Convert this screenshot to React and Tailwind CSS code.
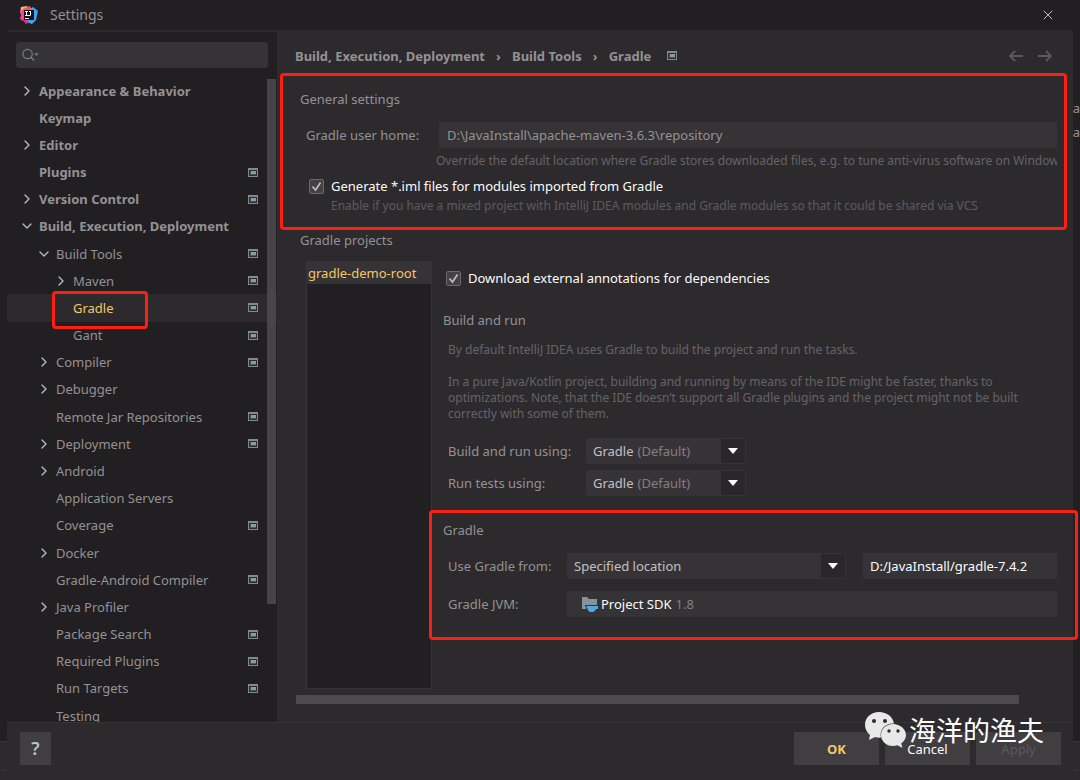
import { ChevronDown, ChevronRight, X } from "lucide-react";

const treeItems = [
  { label: "Appearance & Behavior", level: 0, arrow: "right" },
  { label: "Keymap", level: 0 },
  { label: "Editor", level: 0, arrow: "right" },
  { label: "Plugins", level: 0, project: true },
  { label: "Version Control", level: 0, arrow: "right", project: true },
  { label: "Build, Execution, Deployment", level: 0, arrow: "down" },
  { label: "Build Tools", level: 1, arrow: "down", project: true },
  { label: "Maven", level: 2, arrow: "right", project: true },
  { label: "Gradle", level: 2, project: true, selected: true },
  { label: "Gant", level: 2, project: true },
  { label: "Compiler", level: 1, arrow: "right", project: true },
  { label: "Debugger", level: 1, arrow: "right" },
  { label: "Remote Jar Repositories", level: 1, project: true },
  { label: "Deployment", level: 1, arrow: "right", project: true },
  { label: "Android", level: 1, arrow: "right" },
  { label: "Application Servers", level: 1 },
  { label: "Coverage", level: 1, project: true },
  { label: "Docker", level: 1, arrow: "right" },
  { label: "Gradle-Android Compiler", level: 1, project: true },
  { label: "Java Profiler", level: 1, arrow: "right" },
  { label: "Package Search", level: 1, project: true },
  { label: "Required Plugins", level: 1, project: true },
  { label: "Run Targets", level: 1, project: true },
  { label: "Testing", level: 1 },
];

const indents = ["pl-[12px]", "pl-[29px]", "pl-[46px]"];

function ProjectIcon() {
  return (
    <svg className="h-[9px] w-[10px] shrink-0" viewBox="0 0 10 9">
      <path fill="#7f8b91" d="M0 0h10v9H0z" />
      <path fill="#2d2a2e" d="M1 2h8v6H1z" />
      <path fill="#4d585d" d="M2 3h6v4H2z" />
      <path fill="#8d9a9f" d="M3 3h5v3H3z" />
    </svg>
  );
}

function IdeaLogo() {
  return (
    <svg className="h-[18px] w-[18px]" viewBox="0 0 18 18">
      <path fill="#fdb060" d="M1 1l6-1 3 3-6 6-4-2z" />
      <path fill="#f0479a" d="M0 5l4-2 2 9-3 3-3-2 1-4z" />
      <path fill="#fb4f5f" d="M3 3l7-3 2 4-8 4z" />
      <path fill="#41a5ee" d="M10 3l3-2 5 4-2 9-4 4-6-2z" />
      <path fill="#e8307f" d="M2 13l4-1 3 4-3 2z" />
      <path fill="#17131a" d="M4 4h10v10H4z" />
      <path fill="#fff" d="M5 5h3v1H7v3h1v1H5V9h1V6H5zM9 5h2v4l-1 1H8V9h2V6H9zM5 12h4v1H5z" />
    </svg>
  );
}

function TreeRow({ item }) {
  return (
    <li
      className={`relative flex flex-1 items-center pr-[19px] ${indents[item.level]} ${
        item.selected ? "bg-[#2d2a2e]" : ""
      }`}
    >
      <span className="flex w-[20px] shrink-0 text-[#b4bcbc]">
        {item.arrow === "right" && <ChevronRight size={16} />}
        {item.arrow === "down" && <ChevronDown size={16} />}
      </span>
      <a
        href="#"
        className={`flex-1 whitespace-nowrap ${
          item.selected ? "text-[#f3c864]" : ""
        } ${item.level === 0 ? "font-bold" : ""}`}
      >
        {item.label}
      </a>
      {item.project && <ProjectIcon />}
      {item.selected && (
        <span className="pointer-events-none absolute -top-[3px] left-[45px] h-[38px] w-[96px] rounded-sm border-[3px] border-[#ff1f12]" />
      )}
    </li>
  );
}

function Sidebar() {
  return (
    <aside className="flex w-[270px] shrink-0 flex-col overflow-hidden bg-[#221f22] pt-[10px]">
      <label className="mr-[9px] ml-[9px] flex h-[26px] shrink-0 items-center rounded-sm bg-[#363337] px-[6px]">
        <svg className="h-[14px] w-[18px]" viewBox="0 0 18 14" fill="none">
          <circle cx="6" cy="6" r="5" stroke="#73807f" strokeWidth="1.3" />
          <path d="M9.500 9.500L13 13" stroke="#73807f" strokeWidth="1.500" />
          <path d="M13 5h5l-2.500 3z" fill="#73807f" />
        </svg>
        <input
          type="text"
          aria-label="Search settings"
          className="w-full min-w-0 bg-transparent outline-none"
        />
      </label>
      <div className="relative mt-[9px] -mb-[7px] flex min-h-0 flex-1">
        <ul className="flex min-w-0 flex-1 flex-col">
          {treeItems.map((item) => (
            <TreeRow key={item.label} item={item} />
          ))}
        </ul>
        {/* Scrollbar thumb */}
        <div className="pointer-events-none absolute top-[2px] right-[1px] bottom-[125px] w-[9px] bg-[#504e51]/80" />
      </div>
    </aside>
  );
}

function Checkbox({ id, label }) {
  return (
    <div className="flex items-center gap-[7px]">
      <span className="grid place-items-center">
        <input
          id={id}
          type="checkbox"
          defaultChecked
          className="col-start-1 row-start-1 h-[15px] w-[15px] appearance-none rounded-xs border border-[#6b696b] bg-[#434144]"
        />
        <svg
          className="pointer-events-none col-start-1 row-start-1 h-[11px] w-[11px]"
          viewBox="0 0 11 11"
          fill="none"
        >
          <path d="M1.500 5.500l3 3.500L9.500 1.500" stroke="#b9bbbb" strokeWidth="1.800" />
        </svg>
      </span>
      <label htmlFor={id} className="text-[#fcfcfa]">
        {label}
      </label>
    </div>
  );
}

function Dropdown({ id, value, suffix, className }) {
  return (
    <div
      className={`flex h-[26px] items-center rounded-xs border border-[#363337] bg-[#363337] ${className}`}
    >
      <select
        id={id}
        className="field-sizing-content appearance-none pl-[6px] text-[#c1c0c0] outline-none"
      >
        <option>{value}</option>
      </select>
      {suffix && <span className="pl-1 text-[#828082]">{suffix}</span>}
      <span className="ml-auto flex h-full w-[24px] items-center justify-center bg-[#2a272b]">
        <svg className="h-[6px] w-[10px]" viewBox="0 0 10 6">
          <path fill="#fcfcfa" d="M0 0h10L5 6z" />
        </svg>
      </span>
    </div>
  );
}

function GeneralSettings() {
  return (
    <section className="mr-[6px] ml-[3px] h-[157px] rounded-sm border-[3px] border-[#ff1f12] pt-[13px] pr-[7px] pl-[17px]">
      <h2 className="leading-5">General settings</h2>
      <div className="mt-[13px] flex items-center pl-[6px]">
        <label htmlFor="home" className="w-[133px] shrink-0">
          Gradle user home:
        </label>
        <input
          id="home"
          type="text"
          defaultValue="D:\JavaInstall\apache-maven-3.6.3\repository"
          className="h-[26px] min-w-0 flex-1 bg-[#363337] px-2 outline-none"
        />
      </div>
      <p className="mt-[5px] ml-[136px] overflow-hidden text-xs leading-4 whitespace-nowrap text-[#656366]">
        Override the default location where Gradle stores downloaded files, e.g.
        to tune anti-virus software on Windows
      </p>
      <div className="mt-[7px] pl-[9px]">
        <Checkbox
          id="iml"
          label="Generate *.iml files for modules imported from Gradle"
        />
        <p className="mt-[2px] pl-[22px] text-xs leading-4 text-[#5d5b5e]">
          Enable if you have a mixed project with IntelliJ IDEA modules and
          Gradle modules so that it could be shared via VCS
        </p>
      </div>
    </section>
  );
}

function GradleProjects() {
  return (
    <section className="flex flex-1 flex-col">
      <h2 className="pl-[23px] leading-5">Gradle projects</h2>
      <div className="mt-[11px] flex flex-1 pl-[29px]">
        <ul className="w-[126px] shrink-0 border border-[#363337] bg-[#221f22]">
          <li className="bg-[#363337] pl-[1px] leading-[22px] text-[#f3c864]">
            gradle-demo-root
          </li>
        </ul>
        <div className="min-w-0 flex-1 pt-[7px]">
          <div className="pl-[14px]">
            <Checkbox
              id="annotations"
              label="Download external annotations for dependencies"
            />
          </div>

          <h3 className="mt-[22px] pl-[11px] leading-5">Build and run</h3>
          <div className="mt-[12px] pr-[24px] pl-[16px] text-xs leading-4 text-[#656366]">
            <p>
              By default IntelliJ IDEA uses Gradle to build the project and run
              the tasks.
            </p>
            <p className="mt-4">
              In a pure Java/Kotlin project, building and running by means of
              the IDE might be faster, thanks to optimizations. Note, that the
              IDE doesn’t support all Gradle plugins and the project might not
              be built correctly with some of them.
            </p>
          </div>
          <div className="mt-4 flex items-center pl-[16px]">
            <label htmlFor="build" className="w-[138px]">
              Build and run using:
            </label>
            <Dropdown id="build" value="Gradle" suffix="(Default)" className="w-[160px]" />
          </div>
          <div className="mt-[6px] flex items-center pl-[16px]">
            <label htmlFor="tests" className="w-[138px]">
              Run tests using:
            </label>
            <Dropdown id="tests" value="Gradle" suffix="(Default)" className="w-[160px]" />
          </div>

          <div className="relative mt-[14px] -mr-[5px] -ml-[3px] h-[130px] rounded-sm border-[3px] border-[#ff1f12] pt-[7px] pr-[18px] pl-[11px]">
            <h3 className="leading-5">Gradle</h3>
            <div className="mt-[13px] flex items-center pl-[5px]">
              <label htmlFor="from" className="w-[119px] shrink-0">
                Use Gradle from:
              </label>
              <Dropdown id="from" value="Specified location" className="min-w-0 flex-1" />
              <input
                type="text"
                aria-label="Gradle location"
                defaultValue="D:/JavaInstall/gradle-7.4.2"
                className="ml-[17px] h-[26px] w-[194px] bg-[#363337] px-[7px] text-[#fcfcfa] outline-none"
              />
            </div>
            <div className="mt-3 flex items-center pl-[5px]">
              <label htmlFor="jvm" className="w-[119px] shrink-0">
                Gradle JVM:
              </label>
              <div className="flex h-[26px] flex-1 items-center bg-[#363337] pl-[14px]">
                <svg className="mr-[3px] h-[16px] w-[17px]" viewBox="0 0 17 16">
                  <path fill="#87939a" d="M1 1h5l2 2h8v7H5v3H1z" />
                  <path fill="#363337" d="M4 9h13v2H4z" />
                  <path fill="#4fa8e0" d="M5 10h12v3h-2c-1 4-7 4-8 1z" />
                </svg>
                <select
                  id="jvm"
                  className="field-sizing-content appearance-none text-[#fcfcfa] outline-none"
                >
                  <option>Project SDK</option>
                </select>
                <span className="pl-1 text-[#828082]">1.8</span>
              </div>
            </div>
          </div>
        </div>
      </div>
    </section>
  );
}

function Breadcrumbs() {
  return (
    <div className="flex h-[41px] shrink-0 items-center pt-[6px] pr-[21px] pl-[18px] font-bold">
      <nav className="flex items-center">
        <a href="#">Build, Execution, Deployment</a>
        <span className="w-[27px] text-center">›</span>
        <a href="#">Build Tools</a>
        <span className="w-[27px] text-center">›</span>
        <a href="#">Gradle</a>
      </nav>
      <span className="ml-4">
        <ProjectIcon />
      </span>
      <div className="ml-auto flex gap-[15px]">
        <button type="button" aria-label="Back">
          <svg className="h-[12px] w-[14px]" viewBox="0 0 14 12" fill="none" stroke="#5b595c" strokeWidth="1.800">
            <path d="M14 6H1M6 1L1 6l5 5" />
          </svg>
        </button>
        <button type="button" aria-label="Forward">
          <svg className="h-[12px] w-[14px]" viewBox="0 0 14 12" fill="none" stroke="#5b595c" strokeWidth="1.800">
            <path d="M0 6h13M8 1l5 5-5 5" />
          </svg>
        </button>
      </div>
    </div>
  );
}

function Watermark() {
  return (
    <div className="pointer-events-none absolute -top-[12px] right-[29px] flex items-center gap-[2px]">
      <svg className="h-[38px] w-[43px]" viewBox="0 0 43 38">
        <path
          fill="#e8e8e8"
          d="M15 1C7 1 1 6.500 1 14c0 4 2 7.500 5 10l-1 5 6-3c2 .5 4 .8 6 .6C15 19 21 12 30 12.500 29 6 23 1 15 1z"
        />
        <path
          fill="#e8e8e8"
          d="M29 13c-7 0-12 5-12 11s5 11 12 11c1.500 0 3-.2 4.500-.7l5 2.700-1.300-4.500C40 30.500 42 27.500 42 24c0-6-6-11-13-11z"
        />
        <g fill="#2d2a2e">
          <circle cx="10" cy="10" r="2" />
          <circle cx="21" cy="10" r="2" />
          <circle cx="25" cy="20" r="1.700" />
          <circle cx="34" cy="20" r="1.700" />
        </g>
      </svg>
      <span className="font-['Noto_Sans_CJK_SC',sans-serif] text-[27px] leading-9 text-white">
        海洋的渔夫
      </span>
    </div>
  );
}

function Footer() {
  return (
    <footer className="relative flex h-[58px] shrink-0 items-start border-t border-[#363337] pt-[9px] pr-[12px] pl-[13px]">
      <button
        type="button"
        aria-label="Help"
        className="h-[33px] w-[31px] bg-[#403e41] text-lg leading-[33px] font-semibold text-[#c1c0c0]"
      >
        ?
      </button>
      <div className="ml-auto flex gap-[6px]">
        <button type="button" className="h-[33px] w-[85px] bg-[#403e41] font-bold text-[#f3c864]">
          OK
        </button>
        <button type="button" className="h-[33px] w-[85px] bg-[#403e41] text-[#fcfcfa]">
          Cancel
        </button>
        <button type="button" disabled className="h-[33px] w-[85px] bg-[#403e41] text-[#5b595c]">
          Apply
        </button>
      </div>
      <Watermark />
    </footer>
  );
}

// Status bar of the editor window that lies behind the dialog
function EditorStatusBar() {
  return (
    <div className="flex h-[39px] shrink-0 flex-col border-t border-[#363337] bg-[#2d2a2e] pt-[28px]">
      <div className="border-t border-[#363337]" />
    </div>
  );
}

export default function App() {
  return (
    <div className="flex h-screen overflow-hidden bg-[#221f22] font-['Noto_Sans',sans-serif] text-[13px] leading-5 text-[#939293]">
      <div className="flex w-[7px] shrink-0 flex-col justify-end">
        <EditorStatusBar />
      </div>

      <div className="flex min-w-0 flex-1 flex-col bg-[#2d2a2e]">
        <header className="flex h-[32px] shrink-0 items-center border-b-2 border-[#2d2a2e] bg-[#221f22] pr-[17px] pl-[13px]">
          <IdeaLogo />
          <h1 className="pl-[12px] text-sm">Settings</h1>
          <button type="button" aria-label="Close" className="ml-auto text-[#c1c0c0]">
            <X size={16} strokeWidth={1.5} />
          </button>
        </header>
        <div className="flex min-h-0 flex-1">
          <Sidebar />
          <main className="flex min-w-0 flex-1 flex-col">
            <Breadcrumbs />
            <GeneralSettings />
            <GradleProjects />
            {/* Horizontal scrollbar */}
            <div className="mt-[6px] mr-[54px] mb-[18px] ml-[19px] h-[9px] shrink-0 bg-[#4c4a4d]" />
          </main>
        </div>
        <Footer />
      </div>

      <div className="flex w-[7px] shrink-0 flex-col">
        <div className="flex flex-1 flex-col items-end overflow-hidden pt-[96px] leading-6">
          <span>pa</span>
          <span>pa</span>
        </div>
        <EditorStatusBar />
      </div>
    </div>
  );
}
